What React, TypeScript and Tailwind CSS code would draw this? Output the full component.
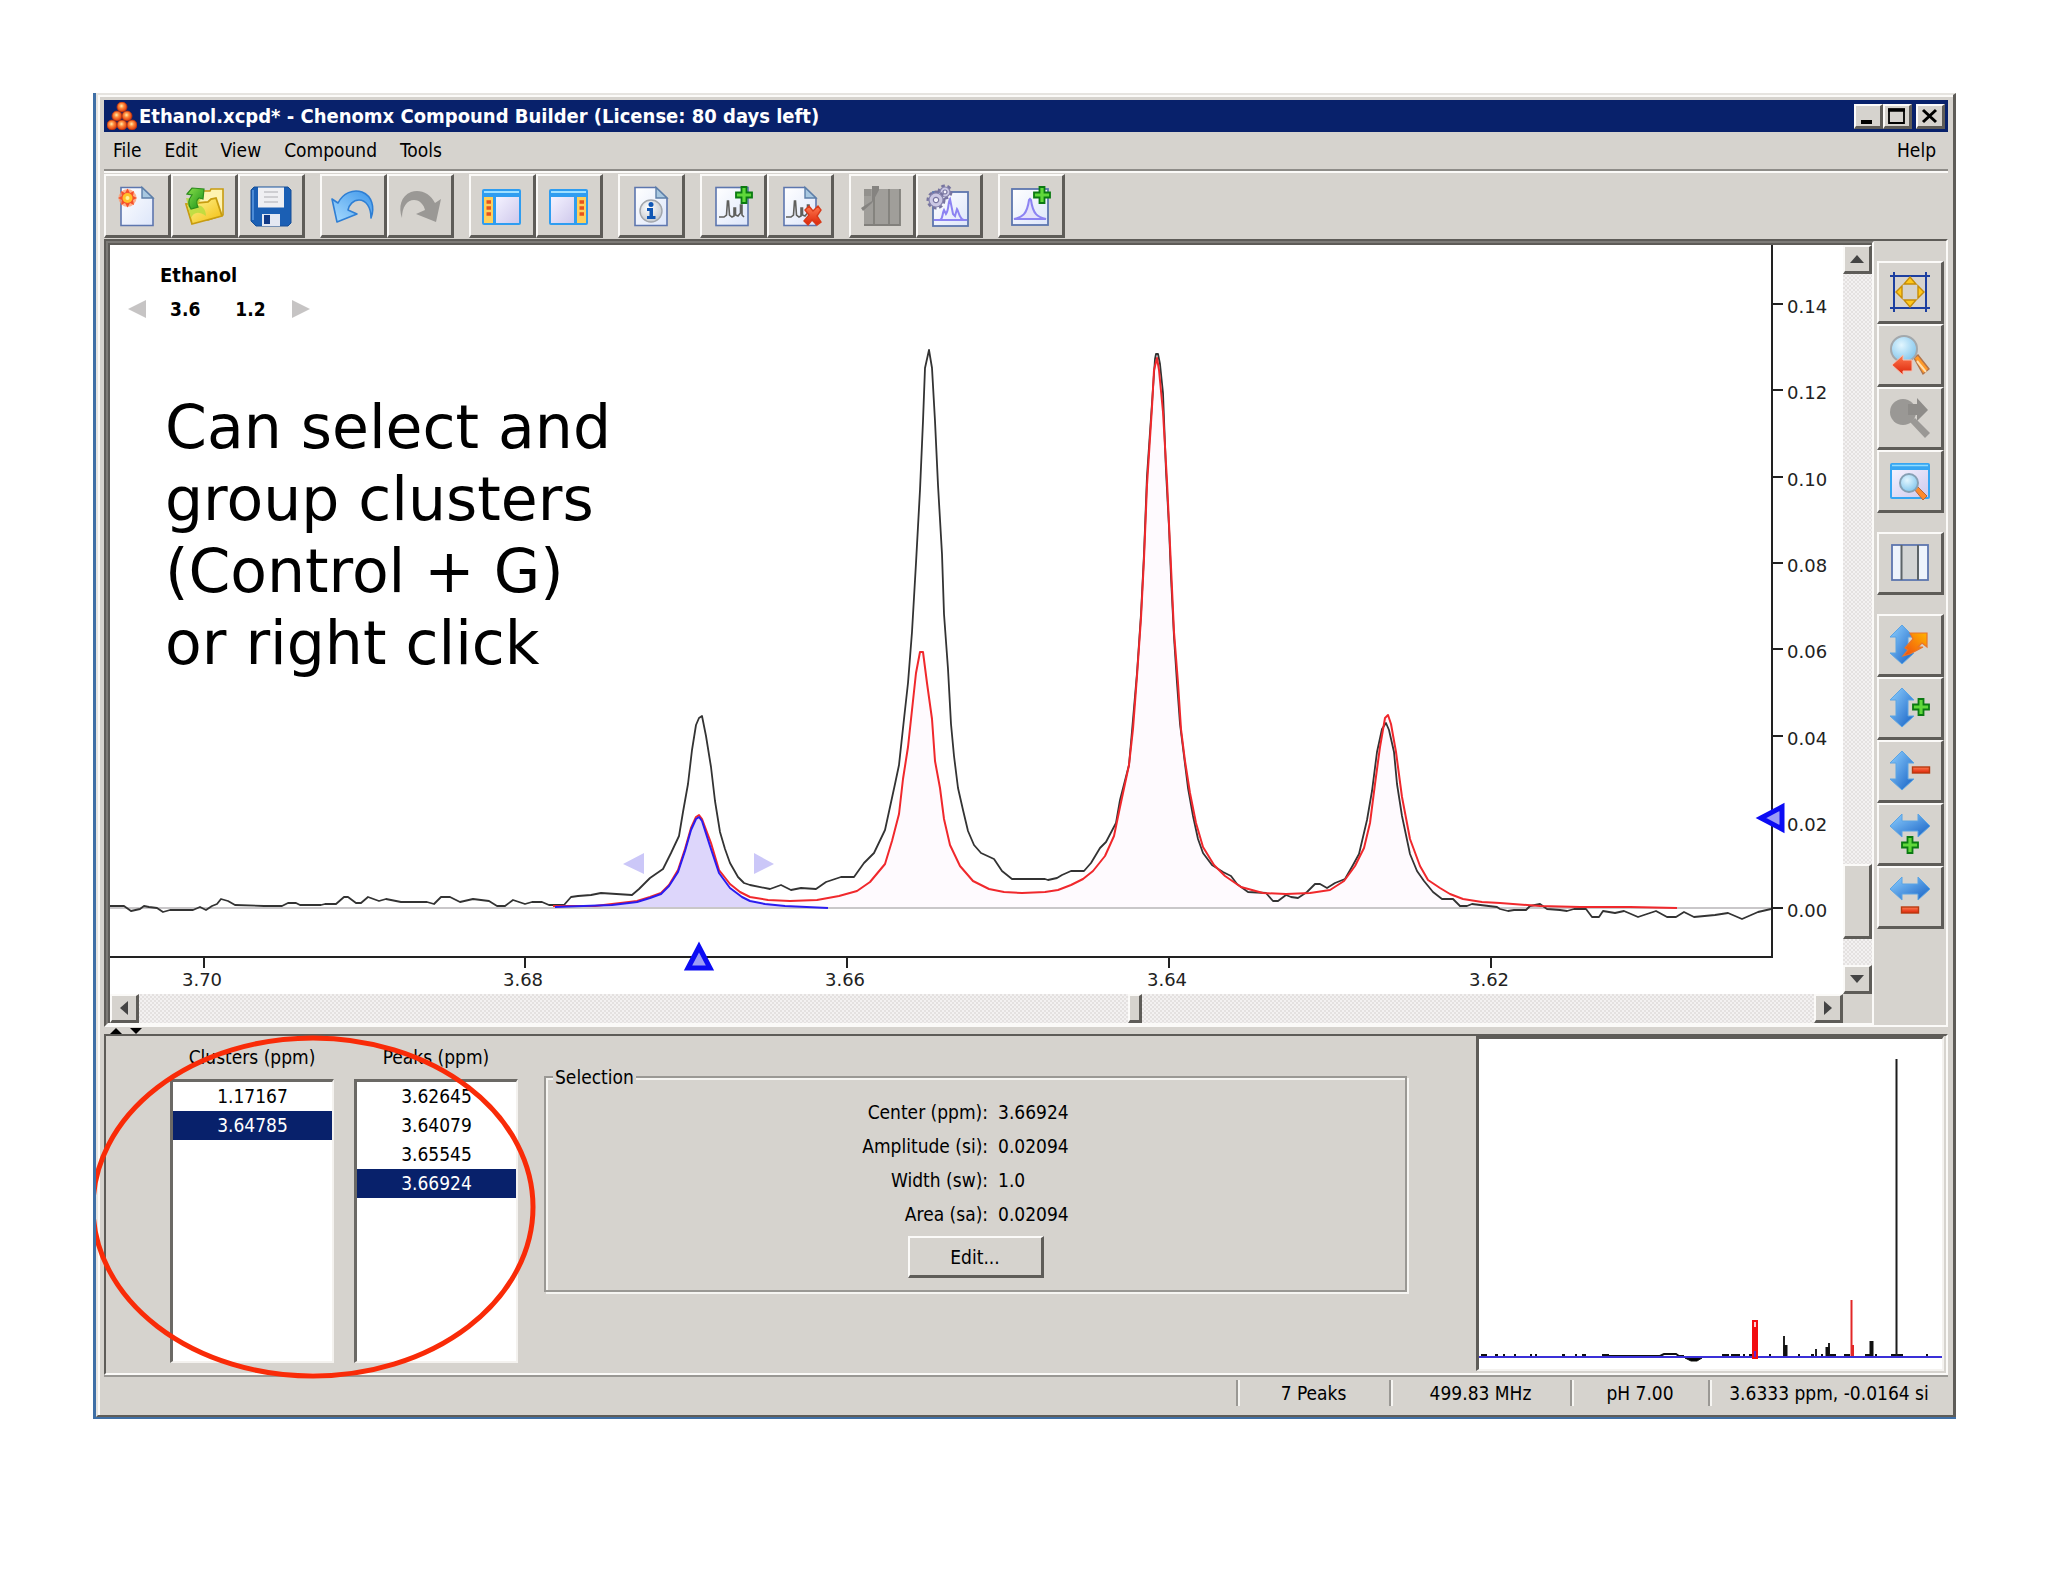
import type { ReactNode } from "react";

type IconProps = { children: ReactNode };

const Icon = ({ children }: IconProps) => (
  <svg viewBox="0 0 40 40" className="block h-10 w-10 overflow-visible" aria-hidden="true">
    {children}
  </svg>
);

const Gradients = () => (
  <svg className="absolute h-0 w-0" aria-hidden="true">
    <defs>
      <linearGradient id="paper" x1="0" y1="0" x2="1" y2="1">
        <stop offset="0" stopColor="#ffffff" />
        <stop offset="1" stopColor="#dde6fa" />
      </linearGradient>
      <linearGradient id="blueArrow" x1="0" y1="0" x2="1" y2="1">
        <stop offset="0" stopColor="#8fd0ff" />
        <stop offset="1" stopColor="#1560c4" />
      </linearGradient>
      <linearGradient id="undo" x1="0" y1="1" x2="1" y2="0">
        <stop offset="0" stopColor="#a9dcff" />
        <stop offset="1" stopColor="#3f97ea" />
      </linearGradient>
      <linearGradient id="pane" x1="0" y1="0" x2="1" y2="1">
        <stop offset="0" stopColor="#f4f2ff" />
        <stop offset="1" stopColor="#cfc9ec" />
      </linearGradient>
      <linearGradient id="folder" x1="0" y1="0" x2="1" y2="1">
        <stop offset="0" stopColor="#fff79a" />
        <stop offset="1" stopColor="#f2bd0c" />
      </linearGradient>
      <linearGradient id="green" x1="0" y1="0" x2="1" y2="1">
        <stop offset="0" stopColor="#8be04a" />
        <stop offset="1" stopColor="#159018" />
      </linearGradient>
      <linearGradient id="red" x1="0" y1="0" x2="0" y2="1">
        <stop offset="0" stopColor="#ff7a50" />
        <stop offset="1" stopColor="#dc2408" />
      </linearGradient>
      <linearGradient id="orange" x1="0" y1="1" x2="1" y2="0">
        <stop offset="0" stopColor="#f04a10" />
        <stop offset="1" stopColor="#ffb400" />
      </linearGradient>
      <radialGradient id="lens" cx="0.4" cy="0.35" r="0.7">
        <stop offset="0" stopColor="#e2f6ff" />
        <stop offset="1" stopColor="#7fc4ec" />
      </radialGradient>
      <radialGradient id="atom" cx="0.45" cy="0.4" r="0.6">
        <stop offset="0" stopColor="#fff0b0" />
        <stop offset="0.4" stopColor="#ff8a3c" />
        <stop offset="1" stopColor="#d83208" />
      </radialGradient>
      <radialGradient id="badge" cx="0.4" cy="0.35" r="0.7">
        <stop offset="0" stopColor="#ffffff" />
        <stop offset="1" stopColor="#c3c7cc" />
      </radialGradient>
    </defs>
  </svg>
);

const Page = () => (
  <>
    <path d="M4 1.5H25L36 12V39.5H4Z" fill="url(#paper)" stroke="#5d76ae" strokeWidth="1.6" />
    <path d="M25 1.5V12H36Z" fill="#a9c8e0" stroke="#5d7fa8" strokeWidth="1.4" />
  </>
);

const Plus = ({ x, y }: { x: number; y: number }) => (
  <path
    transform={`translate(${x} ${y})`}
    d="M-2.5 -8H2.5V-2.5H8V2.5H2.5V8H-2.5V2.5H-8V-2.5H-2.5Z"
    fill="#5fd83a"
    stroke="#0b7a12"
    strokeWidth="1.8"
  />
);

const Minus = ({ x, y }: { x: number; y: number }) => (
  <rect x={x - 8.5} y={y - 3} width="17" height="6" fill="url(#red)" stroke="#b83a10" strokeWidth="1.4" />
);

const Spectrum = () => (
  <path
    d="M6 31H11L13.5 29L14.5 15H15.5L16.5 29L19 31L21 30V22H22.5V29L25 30L27.5 27V19H29V29L31 31"
    fill="none"
    stroke="#5f5f5c"
    strokeWidth="1.6"
  />
);

const NewIcon = () => (
  <Icon>
    <Page />
    <circle cx="10.5" cy="12" r="9" fill="#ff9a6a" opacity="0.75" />
    <path
      d="M10.5 2.5L13 7L17 5L16 10L20 12L16 14L17 19L13 17L10.5 21.5L8 17L4 19L5 14L1 12L5 10L4 5L8 7Z"
      fill="#f7502a"
    />
    <circle cx="10.5" cy="12" r="5" fill="#ffc02a" />
    <circle cx="10.5" cy="12" r="2" fill="#fff19a" />
  </Icon>
);

const OpenIcon = () => (
  <Icon>
    <path d="M14 10L17 5H26L27 3H39V29L24 34L14 33Z" fill="#fff3b0" stroke="#c79c10" strokeWidth="1.6" />
    <path d="M2 18L8 38L38 30L32 12L27 13L24 16Z" fill="url(#folder)" stroke="#c79c10" strokeWidth="1.8" />
    <path d="M2 12L7 32C9 27 14 24 22 30C22 23 17 18 13 20L17 13Z" fill="#b4dc3c" opacity="0.8" />
    <path
      d="M3 8L8 2L20 3L19 13L15 12C12 14 12 17 14 21L7 23C4 19 4 14 8 9Z"
      fill="url(#green)"
      stroke="#2c8c1c"
      strokeWidth="1.2"
    />
  </Icon>
);

const SaveIcon = () => (
  <Icon>
    <path d="M3 1H37L40 4V37L37 40H5L0 35V4Z" fill="#1b5fb4" stroke="#164f96" strokeWidth="1" />
    <rect x="7" y="1.5" width="26" height="20" fill="#efeff2" />
    <path d="M13 6H27M13 11H27M13 16H27" stroke="#c3c3c8" strokeWidth="1.6" />
    <rect x="11" y="28" width="18" height="12" fill="#e4e8f2" />
    <rect x="13" y="29" width="6" height="9" fill="#123a86" />
    <path d="M2 4V34" stroke="#5a98e0" strokeWidth="1.6" />
  </Icon>
);

const UndoIcon = () => (
  <Icon>
    <path
      d="M-1 13L5 17C10 7 20 3 29 6C39 10 42 21 38 32C38 21 33 14 26 14C20 14 16 19 15 24L24 28L4 36Z"
      fill="url(#undo)"
      stroke="#2f7fd4"
      strokeWidth="1.6"
      strokeLinejoin="round"
    />
  </Icon>
);

const RedoIcon = () => (
  <Icon>
    <path
      d="M41 13L35 17C30 7 20 3 11 6C1 10 -2 21 2 32C2 21 7 14 14 14C20 14 24 19 25 24L16 28L36 36Z"
      fill="#9a9895"
    />
  </Icon>
);

const PaneWindow = () => (
  <>
    <rect x="0" y="3" width="39" height="36" rx="2" fill="#2f9df0" />
    <rect x="2" y="5" width="35" height="2" fill="#9fe0ff" />
  </>
);

const LeftPaneIcon = () => (
  <Icon>
    <PaneWindow />
    <rect x="2" y="11" width="9" height="26" fill="#ffd05a" />
    <rect x="14" y="11" width="23" height="26" fill="url(#pane)" />
    <path d="M4.5 16H9M4.5 22H9M4.5 28H9" stroke="#e8541c" strokeWidth="3.4" />
  </Icon>
);

const RightPaneIcon = () => (
  <Icon>
    <PaneWindow />
    <rect x="2" y="11" width="23" height="26" fill="url(#pane)" />
    <rect x="28" y="11" width="9" height="26" fill="#ffd05a" />
    <path d="M30.5 16H35M30.5 22H35M30.5 28H35" stroke="#e8541c" strokeWidth="3.4" />
  </Icon>
);

const InfoIcon = () => (
  <Icon>
    <Page />
    <circle cx="20" cy="25" r="11" fill="url(#badge)" stroke="#a2a6ac" strokeWidth="1.4" />
    <circle cx="20" cy="18.5" r="2.5" fill="#0f56b4" />
    <path d="M16 22H22V30H24.5V33H16V30H18.5V25H16Z" fill="#0f56b4" />
  </Icon>
);

const AddSpectrumIcon = () => (
  <Icon>
    <rect x="3" y="1.5" width="32" height="38" fill="url(#paper)" stroke="#5d76ae" strokeWidth="1.6" />
    <Spectrum />
    <Plus x={31} y={9} />
  </Icon>
);

const RemoveSpectrumIcon = () => (
  <Icon>
    <Page />
    <Spectrum />
    <path
      d="M25 24L29 20L33 25L38 20L41 24L37 30L41 36L37 39L32 34L28 39L24 35L29 29Z"
      fill="url(#red)"
      stroke="#d83a1a"
      strokeWidth="1.4"
    />
  </Icon>
);

const ProcessDisabledIcon = () => (
  <Icon>
    <rect x="2" y="3" width="36" height="36" fill="#a09e9a" />
    <path d="M12 3V39M27 3V39M2 39H38V3" fill="none" stroke="#82807c" strokeWidth="1.8" />
    <path d="M-1 22L10 15V0H17V4L10 17L1 25Z" fill="#858380" />
    <path d="M2 3H9V10H2Z" fill="#93918d" />
  </Icon>
);

const Gear = ({ x, y, r }: { x: number; y: number; r: number }) => (
  <g transform={`translate(${x} ${y})`}>
    <circle r={r} fill="none" stroke="#77749f" strokeWidth="3" strokeDasharray="3.4 2.6" />
    <circle r={r - 1} fill="#cbc8e4" stroke="#8582ac" strokeWidth="1.2" />
    <circle r={r / 3} fill="#f4f3fb" stroke="#77749f" strokeWidth="1.2" />
  </g>
);

const ProcessIcon = () => (
  <Icon>
    <rect x="4" y="6" width="35" height="34" fill="url(#paper)" stroke="#5d76ae" strokeWidth="1.8" />
    <path
      d="M5 34H38M11 34C14 33 13 28 15 24L17 28C20 24 19 16 21 13L24 28L26 30L28 23C30 26 30 33 35 34"
      fill="none"
      stroke="#8c83f2"
      strokeWidth="2"
    />
    <Gear x={16} y={6} r={6} />
    <Gear x={7} y={14} r={8} />
  </Icon>
);

const AddPeakIcon = () => (
  <Icon>
    <rect x="1" y="3" width="36" height="36" fill="url(#paper)" stroke="#5d76ae" strokeWidth="1.8" />
    <path
      d="M3 33C11 31 16 29 18 14L19 13L20 14C22 29 27 31 35 33Z"
      fill="#e4e2fb"
      stroke="#8c83f2"
      strokeWidth="2"
    />
    <Plus x={31} y={9} />
  </Icon>
);

const FitIcon = () => (
  <Icon>
    <path d="M4 0V40M36 0V40M0 4H40M0 36H40" stroke="#1c3fa0" strokeWidth="2" />
    <path
      d="M20 5L26 12H14ZM20 35L26 28H14ZM6 20L12 14V26ZM34 20L28 14V26Z"
      fill="#ffc81c"
      stroke="#c68c08"
      strokeWidth="1.4"
    />
  </Icon>
);

const ZoomBackIcon = () => (
  <Icon>
    <path d="M24 23L28 20L39 34L33 39Z" fill="#ff9a2a" stroke="#b0724a" strokeWidth="1.4" />
    <path d="M27 26L36 37" stroke="#ffe0b0" strokeWidth="2" />
    <circle cx="14" cy="14" r="13" fill="url(#lens)" stroke="#a3a8ac" strokeWidth="2" />
    <path d="M2 30L13 20V25H22V36H13V40Z" fill="url(#red)" stroke="#f6c0b0" strokeWidth="1" />
  </Icon>
);

const ZoomForwardIcon = () => (
  <Icon>
    <circle cx="13" cy="14" r="13" fill="#9a9895" />
    <path d="M18 6H27V0L38 12L27 23V17H18Z" fill="#8e8c89" />
    <path d="M20 24L25 20L40 35L35 40Z" fill="#9a9895" />
  </Icon>
);

const ZoomWindowIcon = () => (
  <Icon>
    <rect x="0" y="2" width="40" height="36" rx="2" fill="#36a6f2" />
    <path d="M2 4.5H38" stroke="#8fdcff" strokeWidth="1.6" />
    <rect x="2" y="9" width="36" height="27" fill="url(#pane)" />
    <path d="M24 28L27 25L37 35L33 39Z" fill="#ff8a2a" stroke="#b8643a" strokeWidth="1" />
    <circle cx="19" cy="22" r="9" fill="url(#lens)" stroke="#86a0b4" strokeWidth="2" />
  </Icon>
);

const RegionIcon = () => (
  <Icon>
    <rect x="2" y="2" width="36" height="35" fill="#eef4fc" stroke="#5d76ae" strokeWidth="1.8" />
    <rect x="11" y="3" width="17" height="33" fill="#d3d5d4" />
    <path d="M11.5 2V37M28 2V37" stroke="#5c6468" strokeWidth="2" />
  </Icon>
);

const VerticalArrow = () => (
  <path
    d="M12 0L24 12H18V28H24L12 39L0 28H6V12H0Z"
    fill="url(#blueArrow)"
    stroke="#5aa4e4"
    strokeWidth="1"
  />
);

const HorizontalArrow = () => (
  <path
    d="M0 12L12 0V7H28V0L40 12L28 23V17H12V23Z"
    fill="url(#blueArrow)"
    stroke="#5aa4e4"
    strokeWidth="1"
  />
);

const AutoHeightIcon = () => (
  <Icon>
    <VerticalArrow />
    <path
      d="M20 8H37V22L32 18L28 22H33L20 29L13 31L18 25L15 23L23 14Z"
      fill="url(#orange)"
      stroke="#e8742a"
      strokeWidth="1.2"
    />
  </Icon>
);

const TallerIcon = () => (
  <Icon>
    <VerticalArrow />
    <Plus x={31} y={19} />
  </Icon>
);

const ShorterIcon = () => (
  <Icon>
    <VerticalArrow />
    <Minus x={31} y={19} />
  </Icon>
);

const WiderIcon = () => (
  <Icon>
    <HorizontalArrow />
    <Plus x={20} y={31} />
  </Icon>
);

const NarrowerIcon = () => (
  <Icon>
    <HorizontalArrow />
    <Minus x={20} y={33} />
  </Icon>
);

const AppIcon = () => (
  <svg viewBox="0 0 30 28" className="h-7 w-[30px]" aria-hidden="true">
    {[
      [15, 5],
      [10, 14],
      [20, 14],
      [5, 23],
      [15, 23],
      [25, 23],
    ].map(([x, y]) => (
      <circle key={`${x}-${y}`} cx={x} cy={y} r="5" fill="url(#atom)" stroke="#b93210" strokeWidth="0.8" />
    ))}
  </svg>
);

const raised =
  "flex shrink-0 items-center justify-center bg-[#d6d3ce] border-t-2 border-l-2 border-r-[3px] border-b-[3px] border-t-[#fbfaf8] border-l-[#fbfaf8] border-r-[#5e5c58] border-b-[#5e5c58]";

type Tool = { label: string; icon: ReactNode; disabled?: boolean };

const toolbarGroups: Tool[][] = [
  [
    { label: "New", icon: <NewIcon /> },
    { label: "Open", icon: <OpenIcon /> },
    { label: "Save", icon: <SaveIcon /> },
  ],
  [
    { label: "Undo", icon: <UndoIcon /> },
    { label: "Redo", icon: <RedoIcon />, disabled: true },
  ],
  [
    { label: "Left panel", icon: <LeftPaneIcon /> },
    { label: "Right panel", icon: <RightPaneIcon /> },
  ],
  [{ label: "Compound info", icon: <InfoIcon /> }],
  [
    { label: "Add spectrum", icon: <AddSpectrumIcon /> },
    { label: "Remove spectrum", icon: <RemoveSpectrumIcon /> },
  ],
  [
    { label: "Adjust regions", icon: <ProcessDisabledIcon />, disabled: true },
    { label: "Process spectrum", icon: <ProcessIcon /> },
  ],
  [{ label: "Add peak", icon: <AddPeakIcon /> }],
];

const sideGroups: Tool[][] = [
  [
    { label: "Fit to window", icon: <FitIcon /> },
    { label: "Previous zoom", icon: <ZoomBackIcon /> },
    { label: "Next zoom", icon: <ZoomForwardIcon />, disabled: true },
    { label: "Zoom window", icon: <ZoomWindowIcon /> },
  ],
  [{ label: "Regions", icon: <RegionIcon /> }],
  [
    { label: "Auto height", icon: <AutoHeightIcon /> },
    { label: "Increase height", icon: <TallerIcon /> },
    { label: "Decrease height", icon: <ShorterIcon /> },
    { label: "Increase width", icon: <WiderIcon /> },
    { label: "Decrease width", icon: <NarrowerIcon /> },
  ],
];

const TitleBar = () => (
  <div className="flex h-8 items-center bg-[#08216b] pr-[3px] pl-[3px]">
    <AppIcon />
    <h1 className="ml-[2px] flex-1 text-[20px] font-bold text-white">
      Ethanol.xcpd* - Chenomx Compound Builder (License: 80 days left)
    </h1>
    <button aria-label="Minimize" className={`${raised} h-[25px] w-[29px]`}>
      <svg viewBox="0 0 24 20" className="h-5 w-6">
        <path d="M5 16H16" stroke="#000" strokeWidth="4" />
      </svg>
    </button>
    <button aria-label="Maximize" className={`${raised} h-[25px] w-[29px]`}>
      <svg viewBox="0 0 24 20" className="h-5 w-6">
        <path d="M4 3.5H19V17H4Z" fill="none" stroke="#000" strokeWidth="1.8" />
        <path d="M3 4H20" stroke="#000" strokeWidth="3.5" />
      </svg>
    </button>
    <button aria-label="Close" className={`${raised} ml-1 h-[25px] w-[29px]`}>
      <svg viewBox="0 0 24 20" className="h-5 w-6">
        <path d="M5 4L18 16M18 4L5 16" stroke="#000" strokeWidth="3" />
      </svg>
    </button>
  </div>
);

const MenuBar = () => (
  <nav className="flex h-[37px] items-center gap-[23px] pr-3 pb-px pl-[9px]">
    {["File", "Edit", "View", "Compound", "Tools"].map((item) => (
      <button key={item}>{item}</button>
    ))}
    <button className="ml-auto">Help</button>
  </nav>
);

const Toolbar = () => (
  <div className="flex gap-[15px] border-t-2 border-[#8e8c88] pt-[3px] pb-px shadow-[inset_0_2px_0_#fbfaf8]">
    {toolbarGroups.map((group, i) => (
      <div key={i} className="flex">
        {group.map((tool) => (
          <button
            key={tool.label}
            aria-label={tool.label}
            disabled={tool.disabled}
            className={`${raised} h-16 w-[67px]`}
          >
            {tool.icon}
          </button>
        ))}
      </div>
    ))}
  </div>
);

const SideToolbar = () => (
  <div className="flex w-[72px] shrink-0 flex-col gap-[19px] pt-5 pl-[3px]">
    {sideGroups.map((group, i) => (
      <div key={i} className="flex flex-col">
        {group.map((tool) => (
          <button
            key={tool.label}
            aria-label={tool.label}
            disabled={tool.disabled}
            className={`${raised} h-[63px] w-[67px]`}
          >
            {tool.icon}
          </button>
        ))}
      </div>
    ))}
  </div>
);

const track =
  "flex bg-[repeating-conic-gradient(#e4e1e0_0_25%,#f3f1f1_0_50%)] bg-[length:4px_4px]";

const VerticalScroll = () => (
  <div className={`${track} flex-col`}>
    <button aria-label="Scroll up" className={`${raised} h-[29px] w-[29px]`}>
      <svg viewBox="0 0 14 8" className="h-2 w-[14px]">
        <path d="M7 0L14 8H0Z" fill="#444" />
      </svg>
    </button>
    <div className="flex-[590]" />
    <div className={`${raised} h-[75px] w-[29px]`} />
    <div className="flex-[26]" />
    <button aria-label="Scroll down" className={`${raised} h-[29px] w-[29px]`}>
      <svg viewBox="0 0 14 8" className="h-2 w-[14px]">
        <path d="M7 8L0 0H14Z" fill="#444" />
      </svg>
    </button>
  </div>
);

const HorizontalScroll = () => (
  <div className={track}>
    <button aria-label="Scroll left" className={`${raised} h-[29px] w-[29px]`}>
      <svg viewBox="0 0 8 14" className="h-[14px] w-2">
        <path d="M0 7L8 0V14Z" fill="#444" />
      </svg>
    </button>
    <div className="flex-[989]" />
    <div className={`${raised} h-[29px] w-[14px]`} />
    <div className="flex-[672]" />
    <button aria-label="Scroll right" className={`${raised} h-[29px] w-[29px]`}>
      <svg viewBox="0 0 8 14" className="h-[14px] w-2">
        <path d="M8 7L0 0V14Z" fill="#444" />
      </svg>
    </button>
  </div>
);

const measured =
  "110,906 124,906 131,911 140,909 144,906 149,907 157,908 163,912 170,910 193,910 200,907 206,910 212,906 217,904 221,899 228,901 235,905 264,906 282,906 288,903 296,903 300,905 321,905 325,904 336,904 344,897 348,897 356,903 361,903 368,897 379,901 386,899 401,902 427,902 434,904 441,897 450,897 460,902 473,899 489,901 497,906 505,906 513,900 525,904 532,902 542,902 549,905 564,905 571,897 578,896 591,895 601,893 632,895 639,889 650,878 663,869 671,853 679,836 683,812 688,784 692,750 696,725 699,718 702,716 706,736 711,767 715,801 720,832 725,849 730,863 738,877 744,883 750,885 770,889 781,885 791,890 801,888 816,889 826,882 841,877 854,877 864,863 874,853 885,830 890,807 895,784 899,765 904,719 908,683 912,632 916,563 920,490 923,421 925,368 929,350 932,368 935,421 938,485 942,554 944,614 948,669 951,724 954,756 958,788 963,810 968,831 974,845 981,853 994,859 1002,871 1012,879 1045,879 1048,880 1057,878 1062,875 1071,871 1084,871 1091,863 1100,848 1106,842 1116,823 1120,800 1129,765 1132,731 1137,673 1141,614 1144,554 1147,476 1152,403 1155,359 1156,354 1158,354 1160,364 1163,393 1166,471 1169,527 1171,577 1174,637 1177,683 1180,724 1184,756 1188,788 1193,816 1198,839 1203,853 1212,865 1223,872 1231,876 1237,884 1248,892 1266,893 1273,901 1278,901 1286,895 1291,897 1298,898 1307,892 1315,884 1320,884 1327,888 1335,883 1345,879 1353,865 1359,854 1367,820 1372,791 1377,752 1382,729 1386,723 1389,730 1394,752 1397,784 1402,816 1410,854 1417,871 1424,881 1433,892 1442,899 1453,899 1460,906 1467,906 1472,904 1497,907 1500,909 1508,911 1514,910 1526,910 1530,906 1540,904 1547,909 1560,910 1567,911 1574,909 1586,909 1592,917 1599,917 1603,911 1615,913 1624,911 1638,917 1656,911 1667,917 1676,917 1684,912 1694,917 1715,915 1728,913 1742,919 1758,912 1771,909";

const fitted =
  "553,906 595,906 612,904 629,902 637,901 650,897 661,893 669,885 678,870 685,849 691,828 696,817 699,815 702,819 711,843 719,870 730,884 740,892 750,897 768,900 790,901 817,900 839,896 857,891 870,882 885,864 892,841 899,814 903,779 908,747 912,710 916,673 920,652 923,652 927,683 932,719 935,761 940,788 944,819 950,845 960,866 973,881 989,889 1004,892 1022,893 1045,892 1058,890 1071,885 1083,879 1093,871 1105,856 1114,836 1120,807 1129,765 1133,729 1137,676 1141,618 1144,559 1147,485 1152,407 1154,370 1157,358 1159,370 1163,412 1167,481 1170,545 1174,632 1178,683 1181,729 1185,761 1190,793 1196,823 1203,847 1214,865 1225,876 1241,887 1263,893 1286,894 1310,893 1330,890 1344,881 1355,866 1364,848 1370,823 1375,784 1380,747 1385,718 1388,715 1391,724 1396,752 1402,797 1410,839 1420,866 1428,880 1440,888 1450,894 1463,899 1482,902 1500,903 1540,906 1580,907 1630,907 1677,908";

const selected =
  "555,907 612,905 629,903 637,902 650,898 661,894 669,886 678,872 685,851 691,830 696,819 699,817 702,821 710,846 719,873 730,888 742,897 750,901 765,904 785,906 828,908";

const amplitudeTicks = [
  { label: "0.14", y: 304 },
  { label: "0.12", y: 390 },
  { label: "0.10", y: 477 },
  { label: "0.08", y: 563 },
  { label: "0.06", y: 649 },
  { label: "0.04", y: 736 },
  { label: "0.02", y: 822 },
  { label: "0.00", y: 908 },
];

const ppmTicks = [
  { label: "3.70", x: 204 },
  { label: "3.68", x: 525 },
  { label: "3.66", x: 847 },
  { label: "3.64", x: 1169 },
  { label: "3.62", x: 1491 },
];

const SpectrumPlot = () => (
  <svg viewBox="110 245 1733 749" className="block h-auto w-full" role="img" aria-label="Ethanol spectrum">
    <polygon points={`${fitted} 1677,908 553,908`} fill="#fefafe" />
    <polygon points={`${selected} 555,908`} fill="#ddd6fb" />
    <path d="M110 908H1771" stroke="#c9c7c9" strokeWidth="2" />
    <polyline points={measured} fill="none" stroke="#333333" strokeWidth="1.8" strokeLinejoin="round" />
    <polyline points={fitted} fill="none" stroke="#f0282c" strokeWidth="2" strokeLinejoin="round" />
    <polyline points={selected} fill="none" stroke="#2a1cf0" strokeWidth="2" strokeLinejoin="round" />
    <path d="M110 957H1772V245" fill="none" stroke="#222222" strokeWidth="2" />
    <g fontSize="18" fill="#222222">
      {amplitudeTicks.map((tick) => (
        <g key={tick.label}>
          <path d={`M1772 ${tick.y}H1783`} stroke="#222222" strokeWidth="2" />
          <text x="1787" y={tick.y + 9} className="font-['DejaVu_Sans']">
            {tick.label}
          </text>
        </g>
      ))}
      {ppmTicks.map((tick) => (
        <g key={tick.label}>
          <path d={`M${tick.x} 957V968`} stroke="#222222" strokeWidth="2" />
          <text x={tick.x - 2} y="986" textAnchor="middle" className="font-['DejaVu_Sans']">
            {tick.label}
          </text>
        </g>
      ))}
    </g>
    <path d="M623 864L644 853V874ZM774 864L754 853V874Z" fill="#cbc7f8" />
    <path d="M699 947L710 968H688Z" fill="#9c9cf6" stroke="#0c0cf4" strokeWidth="5" />
    <path d="M1761 818L1782 807V829Z" fill="#9c9cf6" stroke="#0c0cf4" strokeWidth="5" />
  </svg>
);

const ClusterNav = () => (
  <div className="absolute top-[18px] left-[18px] font-bold">
    <h2 className="pl-8 text-[20px] leading-6">Ethanol</h2>
    <div className="mt-[10px] flex items-center leading-6">
      <button aria-label="Previous cluster">
        <svg viewBox="0 0 18 18" className="h-[18px] w-[18px]">
          <path d="M0 9L18 0V18Z" fill="#c6c4c4" />
        </svg>
      </button>
      <button className="ml-6">3.6</button>
      <button className="ml-[35px]">1.2</button>
      <button aria-label="Next cluster" className="ml-[26px]">
        <svg viewBox="0 0 18 18" className="h-[18px] w-[18px]">
          <path d="M18 9L0 0V18Z" fill="#c6c4c4" />
        </svg>
      </button>
    </div>
  </div>
);

const ChartArea = () => (
  <div className="flex border-2 border-t-[#5e5c58] border-r-[#fbfaf8] border-b-[#fbfaf8] border-l-[#5e5c58]">
    <div className="flex-1 border-t-2 border-r-2 border-b-2 border-l-2 border-t-[#7d7b77] border-r-[#fbfaf8] border-b-[#fbfaf8] border-l-[#7d7b77]">
      <div className="grid grid-cols-[1fr_29px] border-t-2 border-l-2 border-[#5e5c58]">
        <div className="relative bg-white">
          <SpectrumPlot />
          <ClusterNav />
          <p className="absolute top-[146px] left-[55px] font-['DejaVu_Sans',sans-serif] text-[60px] leading-[72px]">
            Can select and
            <br />
            group clusters
            <br />
            (Control + G)
            <br />
            or right click
          </p>
        </div>
        <VerticalScroll />
        <HorizontalScroll />
        <div />
      </div>
    </div>
    <SideToolbar />
  </div>
);

const Splitter = () => (
  <div className="flex h-[7px] gap-2 pt-px pl-[6px]">
    <svg viewBox="0 0 12 6" className="h-[6px] w-3">
      <path d="M6 0L12 6H0Z" />
    </svg>
    <svg viewBox="0 0 12 6" className="h-[6px] w-3">
      <path d="M6 6L0 0H12Z" />
    </svg>
  </div>
);

type ListProps = { id: string; label: string; values: string[]; current: string };

const PpmList = ({ id, label, values, current }: ListProps) => (
  <div className="w-[164px]">
    <h3 id={id} className="text-center leading-6">
      {label}
    </h3>
    <ul
      role="listbox"
      aria-labelledby={id}
      className="mt-[10px] h-[284px] border-t-[3px] border-r-2 border-b-2 border-l-[3px] border-t-[#6b6965] border-r-[#f4f2ef] border-b-[#f4f2ef] border-l-[#6b6965] bg-white"
    >
      {values.map((value) => (
        <li
          key={value}
          role="option"
          aria-selected={value === current}
          className={
            value === current
              ? "bg-[#08216b] text-center leading-[29px] text-white"
              : "text-center leading-[29px]"
          }
        >
          {value}
        </li>
      ))}
    </ul>
  </div>
);

const selectionRows = [
  { label: "Center (ppm):", value: "3.66924" },
  { label: "Amplitude (si):", value: "0.02094" },
  { label: "Width (sw):", value: "1.0" },
  { label: "Area (sa):", value: "0.02094" },
];

const SelectionBox = () => (
  <fieldset className="mt-[29px] mr-[69px] ml-[26px] flex-1 self-start border-2 border-[#9a9894] pb-3 shadow-[2px_2px_0_#f6f5f2,inset_2px_2px_0_#f6f5f2]">
    <legend className="ml-[7px] bg-[#d6d3ce] px-[2px] leading-6">Selection</legend>
    <dl className="mx-auto grid w-max grid-cols-[auto_auto] gap-x-[10px] pt-[6px] pr-5 leading-[34px]">
      {selectionRows.map((row) => (
        <div key={row.label} className="contents">
          <dt className="text-right">{row.label}</dt>
          <dd>{row.value}</dd>
        </div>
      ))}
    </dl>
    <button className={`${raised} mx-auto mt-[5px] h-[42px] w-[136px]`}>Edit...</button>
  </fieldset>
);

const Overview = () => (
  <div className="mr-[2px] mb-[2px] w-[468px] border-t-[3px] border-r-2 border-b-2 border-l-[3px] border-t-[#5e5c58] border-r-[#f4f2ef] border-b-[#f4f2ef] border-l-[#5e5c58] bg-white">
    <svg viewBox="0 0 463 330" className="block h-auto w-full" role="img" aria-label="Full spectrum overview">
      <path
        d="M2 316H8M16 316H19M24 316H26M35 316H37M51 316H53M56 316H58M83 316H86M96 316H98M103 316H107M123 316H130M243 316H250M252 316H261M264 316H266M270 316H273M290 316H292M319 316H321M332 316H335M342 316H344M347 316H357M365 316H371M386 316H391M396 316H398M412 316H424M447 316H449"
        stroke="#111"
        strokeWidth="2"
      />
      <path d="M130 317H181L185 315H197L200 317H205" fill="none" stroke="#111" strokeWidth="2" />
      <path d="M206 319H223L218 322H212Z" stroke="#111" strokeWidth="1" />
      <path d="M305 297V317M337 310V317M350 304V317" stroke="#222" strokeWidth="2" />
      <path d="M306.5 306V317M348.5 308V317M392.5 302V317" stroke="#111" strokeWidth="4" />
      <path d="M417.5 20V317" stroke="#1c1c1c" strokeWidth="2" />
      <path d="M372.5 261V317" stroke="#e22828" strokeWidth="2" />
      <path d="M373.5 306V317" stroke="#e22828" strokeWidth="3" />
      <path d="M0 318H463" stroke="#3a30d8" strokeWidth="2" />
      <rect x="273" y="281" width="6" height="39" fill="#f20c10" />
      <path d="M276 283V288" stroke="#ffd0d0" strokeWidth="2" />
      <path d="M276 312V318" stroke="#6a20c0" strokeWidth="2" />
    </svg>
  </div>
);

const DetailPanel = () => (
  <div className="flex border-2 border-t-[#5e5c58] border-r-[#fbfaf8] border-b-[#fbfaf8] border-l-[#5e5c58]">
    <div className="flex gap-5 pt-[9px] pb-[10px] pl-16">
      <PpmList id="clusters" label="Clusters (ppm)" values={["1.17167", "3.64785"]} current="3.64785" />
      <PpmList
        id="peaks"
        label="Peaks (ppm)"
        values={["3.62645", "3.64079", "3.65545", "3.66924"]}
        current="3.66924"
      />
    </div>
    <SelectionBox />
    <Overview />
  </div>
);

const statusCell =
  "flex h-[26px] items-center justify-center border-l-2 border-[#9a9894] shadow-[inset_2px_0_0_#f6f5f2]";

const StatusBar = () => (
  <footer className="flex h-10 items-start justify-end border-t-2 border-[#9a9894] pt-[3px]">
    <span className={`${statusCell} w-[153px]`}>7 Peaks</span>
    <span className={`${statusCell} w-[181px]`}>499.83 MHz</span>
    <span className={`${statusCell} w-[138px]`}>pH 7.00</span>
    <span className={`${statusCell} w-[240px]`}>3.6333 ppm, -0.0164 si</span>
  </footer>
);

export default function App() {
  return (
    <main className="bg-white pt-[93px] pr-[92px] pb-[163px] pl-[93px] font-['DejaVu_Sans_Condensed','DejaVu_Sans',sans-serif] text-[19px] leading-6 text-black">
      <Gradients />
      <div className="relative overflow-hidden border-b-2 border-l-[3px] border-[#3f6fa6] bg-[#d6d3ce]">
        <div className="border-t-2 border-r-[3px] border-b-2 border-l-2 border-t-[#e6e4e0] border-r-[#5e5c58] border-b-[#5e5c58] border-l-[#e6e4e0] pt-[5px] pr-[5px] pl-[6px] shadow-[inset_2px_2px_0_#fbfaf8]">
          <TitleBar />
          <MenuBar />
          <Toolbar />
          <ChartArea />
          <Splitter />
          <DetailPanel />
          <StatusBar />
        </div>
        {/* Callout around the two lists */}
        <svg viewBox="0 0 450 350" className="pointer-events-none absolute bottom-[35px] -left-[3px] h-[350px] w-[450px]">
          <ellipse cx="220" cy="175" rx="220" ry="169" fill="none" stroke="#f92b08" strokeWidth="5" />
        </svg>
      </div>
    </main>
  );
}
